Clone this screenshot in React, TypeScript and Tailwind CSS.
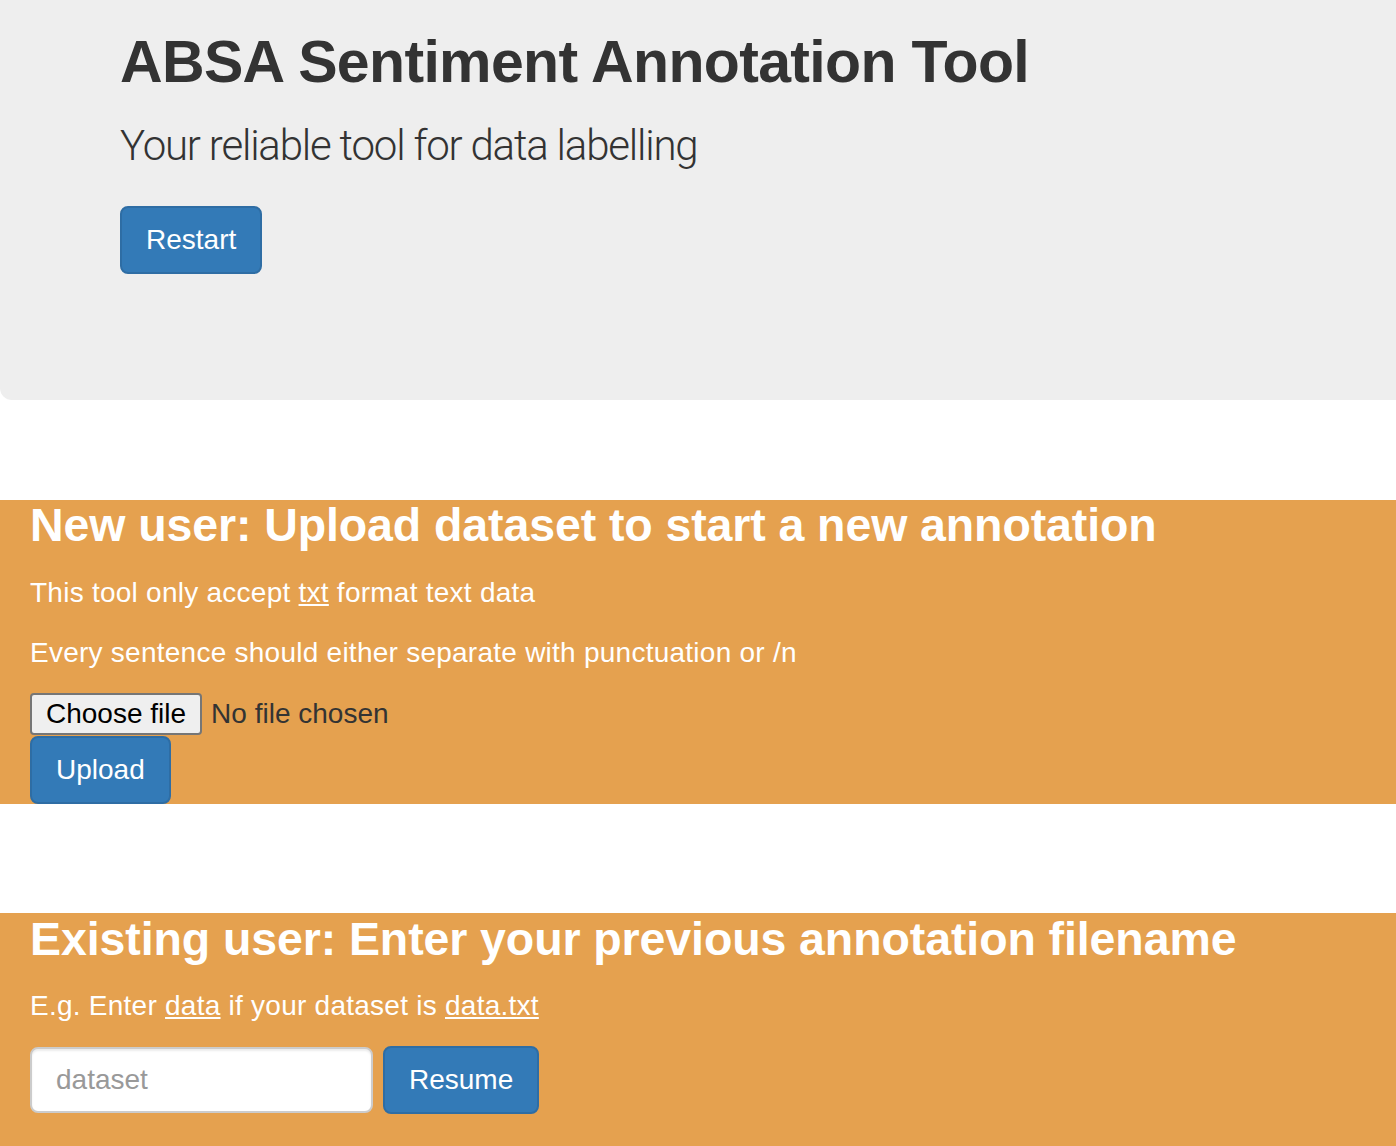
import React from "react";

const sans = "font-['Liberation_Sans',Arial,sans-serif]";

function BlueButton({ children }: { children: React.ReactNode }) {
	return (
		<button
			type="button"
			className="rounded-[8px] border-2 border-[#2e6da4] bg-[#337ab7] px-[24px] py-[12px] text-[28px] leading-[40px] text-white"
		>
			{children}
		</button>
	);
}

export default function App() {
	return (
		<div className={`min-h-screen bg-white text-[#333] ${sans}`}>
			{/* jumbotron */}
			<div className="rounded-bl-[12px] bg-[#eeeeee] pb-[126px] pl-[120px] pt-[30px]">
				<h1 className="mb-[21px] text-[59px] font-bold leading-[1.1] tracking-[-0.65px] text-[#333]">
					ABSA Sentiment Annotation Tool
				</h1>
				<p className="mb-[30px] font-['Roboto',sans-serif] text-[42px] font-light leading-[60px] tracking-[-1.2px] text-[#333]">
					Your reliable tool for data labelling
				</p>
				<BlueButton>Restart</BlueButton>
			</div>

			<div className="h-[100px]" />

			{/* new user */}
			<section className="bg-[#e5a14f] px-[30px] text-white">
				<h3 className="mb-[22px] text-[46.5px] font-bold leading-[1.1] tracking-[-0.1px]">
					New user: Upload dataset to start a new annotation
				</h3>
				<p className="mb-[20px] text-[28px] leading-[40px] tracking-[0.25px]">
					This tool only accept <span className="underline">txt</span> format
					text data
				</p>
				<p className="mb-[20px] text-[28px] leading-[40px] tracking-[0.25px]">
					Every sentence should either separate with punctuation or /n
				</p>
				<div className="flex h-[42px] items-center">
					<button
						type="button"
						className="h-[42px] rounded-[4px] border-2 border-[#767676] bg-[#efefef] px-[14px] text-[28px] leading-[38px] text-black"
					>
						Choose file
					</button>
					<span className="ml-[9px] text-[28px] text-[#333]">
						No file chosen
					</span>
				</div>
				<div className="pt-[1px]">
					<BlueButton>Upload</BlueButton>
				</div>
			</section>

			<div className="h-[109px]" />

			{/* existing user */}
			<section className="bg-[#e5a14f] px-[30px] pb-[36px] pt-[1px] text-white">
				<h3 className="mb-[21px] text-[46.5px] font-bold leading-[1.1] tracking-[-0.1px]">
					Existing user: Enter your previous annotation filename
				</h3>
				<p className="mb-[20px] text-[28px] leading-[40px] tracking-[0.25px]">
					E.g. Enter <span className="underline">data</span> if your dataset is{" "}
					<span className="underline">data.txt</span>
				</p>
				<div className="flex items-center gap-[10px]">
					<input
						type="text"
						placeholder="dataset"
						className="h-[66px] w-[343px] rounded-[8px] border-2 border-[#cccccc] bg-white px-[24px] text-[28px] text-[#555] shadow-[inset_0_2px_2px_rgba(0,0,0,0.075)] outline-none placeholder:text-[#999]"
					/>
					<BlueButton>Resume</BlueButton>
				</div>
			</section>
		</div>
	);
}
